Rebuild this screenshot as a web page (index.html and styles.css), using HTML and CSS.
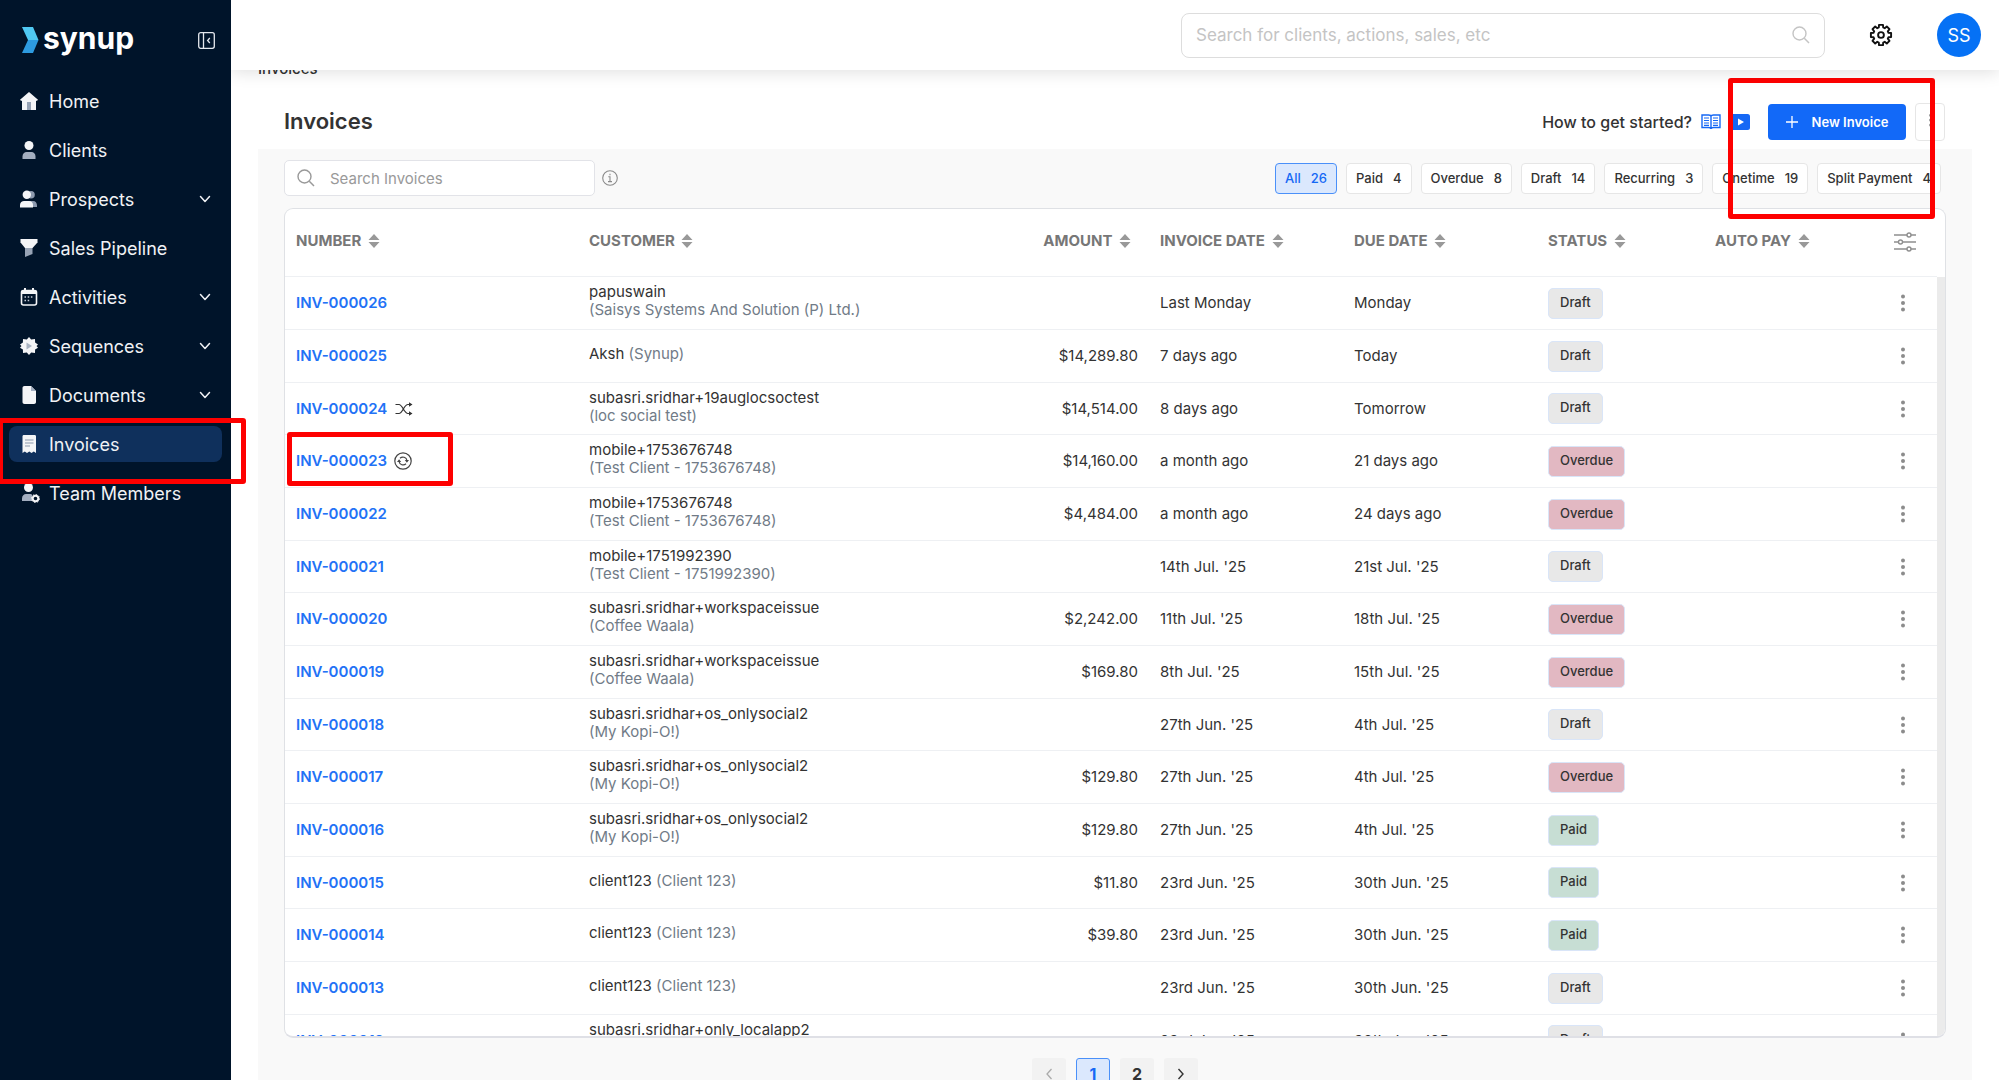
FILE: index.html
```html
<!DOCTYPE html>
<html lang="en">
<head>
  <meta charset="UTF-8">
  <meta name="viewport" content="width=device-width, initial-scale=1">
  <title>Invoices - Synup</title>
  <link rel="stylesheet" href="styles.css">
</head>
<body>

<svg class="sprite" aria-hidden="true">
  <symbol id="i-chevron" viewBox="0 0 12 12"><path d="M1.500 3.500 6 8.500l4.500-5" fill="none" stroke="currentColor" stroke-width="1.500" stroke-linecap="round" stroke-linejoin="round"/></symbol>
  <symbol id="i-search" viewBox="0 0 18 18"><circle cx="7.500" cy="7.500" r="6.500" fill="none" stroke="currentColor" stroke-width="1.400"/><path d="m12.300 12.300 4.700 4.700" fill="none" stroke="currentColor" stroke-width="1.500"/></symbol>
  <symbol id="i-sort" viewBox="0 0 12 14"><path d="M6 0l5.500 6H.5zM6 14l5.500-6H.5z" fill="#999"/></symbol>
  <symbol id="i-dots" viewBox="0 0 4 18"><circle cx="2" cy="2.500" r="2"/><circle cx="2" cy="9" r="2"/><circle cx="2" cy="15.500" r="2"/></symbol>
  <symbol id="i-split" viewBox="0 0 18 14"><path d="M.5 2.500h3.500c3.500 0 5 9 9 9h3.500M.5 11.500h3.500c3.500 0 5-9 9-9h3.500" fill="none" stroke="#333" stroke-width="1.200"/><path d="M14 .2v4.600l3.500-2.300zM14 9.200v4.600l3.500-2.300z" fill="#333"/></symbol>
  <symbol id="i-recurring" viewBox="0 0 18 18"><g fill="none" stroke="#444" stroke-width="1.200"><circle cx="9" cy="9" r="8.200"/><path d="M6 6.200a4.200 4.200 0 0 1 7 2.300M12 11.800a4.200 4.200 0 0 1-7-2.300"/></g><path d="M15 8h-4.200l2.100 2.800zM3 10h4.200L5.100 7.200z" fill="#444"/></symbol>
</svg>

<div class="app">
  <aside class="sidebar">
    <div class="brand">
      <a class="logo" href="#" aria-label="Synup">
        <svg width="17" height="26" viewBox="0 0 17 26"><path d="M0 0h11l5.500 13H6z" fill="#4fc8f2"/><path d="M6 13h10.500L11 26H0z" fill="#2d9be0"/></svg>
        <span>synup</span>
      </a>
      <button class="collapse" aria-label="Collapse menu">
        <svg width="17" height="17" viewBox="0 0 17 17" fill="none" stroke="#e4e8ee" stroke-width="1.300"><rect x=".7" y=".7" width="15.600" height="15.600" rx="2"/><path d="M5.500.7v15.600M11.800 6l-2.200 2.500 2.200 2.500"/></svg>
      </button>
    </div>
    <nav class="menu">
      <a href="#">
        <svg width="18" height="18" viewBox="0 0 18 18"><path d="M9 0 0 7.700l1.200 1.400.8-.6V18h5v-6.500h4V18h5V8.500l.8.600L18 7.700z" fill="#f4f5f7"/><path d="M7 10h4v8H7z" fill="#97a3b5"/></svg>
        Home
      </a>
      <a href="#">
        <svg width="18" height="18" viewBox="0 0 18 18"><circle cx="9" cy="4.500" r="4.500" fill="#f4f5f7"/><path d="M2.500 18v-2.500c0-3 2-4.500 4-4.500h5c2 0 4 1.500 4 4.500V18z" fill="#a3aec0"/></svg>
        Clients
      </a>
      <a href="#">
        <svg width="18" height="18" viewBox="0 0 18 18"><circle cx="11" cy="4.800" r="3.800" fill="#8c99ae"/><path d="M8 11h5c2.500 0 4 2 4 4.500V17H8z" fill="#8c99ae"/><circle cx="6.800" cy="4.800" r="4.200" fill="#f4f5f7"/><path d="M0 17.500V15c0-2.600 2-4 4-4h5c2 0 4 1.400 4 4v2.500z" fill="#f4f5f7"/></svg>
        Prospects
        <svg class="chevron" width="12" height="12"><use href="#i-chevron"/></svg>
      </a>
      <a href="#">
        <svg width="18" height="18" viewBox="0 0 18 18"><path d="M5 8h7.500v7L5 18z" fill="#97a3b5"/><path d="M.5 0h17v3.500L12.500 9H5L.5 3.500z" fill="#f4f5f7"/></svg>
        Sales Pipeline
      </a>
      <a href="#">
        <svg width="18" height="18" viewBox="0 0 18 18"><rect x="1.500" y="2.500" width="15" height="14.500" rx="2" fill="none" stroke="#f4f5f7" stroke-width="1.600"/><path d="M1.500 2.500h15v3.500h-15zM4 0h2v3H4zM12 0h2v3h-2z" fill="#f4f5f7"/><path d="M4.500 9h9M4.500 12.500h6" stroke="#c5ccd6" stroke-width="1.500" stroke-dasharray="1.500 1.700"/></svg>
        Activities
        <svg class="chevron" width="12" height="12"><use href="#i-chevron"/></svg>
      </a>
      <a href="#">
        <svg width="18" height="18" viewBox="0 0 18 18"><path d="m9 0 2.200 2.500 3.800-.5.100 3.500L18 7.500 16.500 9l1.500 1.800-2.900 1.700-.1 3.500-3.800-.5L9 18l-2.200-2.500-3.800.5-.1-3.500L0 10.800 1.500 9 0 7.500l2.900-2L3 2l3.800.5z" fill="#f4f5f7"/><path d="M6.500 5.500 12 9l-5.500 3.500z" fill="#a9b3c2"/></svg>
        Sequences
        <svg class="chevron" width="12" height="12"><use href="#i-chevron"/></svg>
      </a>
      <a href="#">
        <svg width="18" height="18" viewBox="0 0 18 18"><path d="M2.500 2c0-1.200.8-2 2-2H11l5 5v11c0 1.200-.8 2-2 2H4.500c-1.200 0-2-.8-2-2z" fill="#f4f5f7"/><path d="M11 0v5h5z" fill="#a3aec0"/></svg>
        Documents
        <svg class="chevron" width="12" height="12"><use href="#i-chevron"/></svg>
      </a>
      <a href="#" class="active">
        <svg width="18" height="18" viewBox="0 0 18 18"><path d="M2.500 1.500C2.500.5 3 0 4 0h10.500c1 0 1.500.5 1.500 1.500V18l-2.200-1.500L11.500 18l-2.200-1.500L7 18l-2.200-1.500L2.500 18z" fill="#f4f5f7"/><path d="M5 5h8.500M5 8h8.500M5 11h5" stroke="#8c99ae" stroke-width="1.200"/></svg>
        Invoices
      </a>
      <a href="#">
        <svg class="team" width="20" height="20" viewBox="0 0 20 20"><circle cx="8.500" cy="4.500" r="4.500" fill="#f4f5f7"/><path d="M2 18v-2.500c0-3 2-4.500 4-4.500h4.500c1.500 0 2 1 1.500 2.500V18z" fill="#a3aec0"/><circle cx="15.500" cy="15.500" r="2.800" fill="none" stroke="#f4f5f7" stroke-width="2"/><circle cx="15.500" cy="15.500" r="4" fill="none" stroke="#f4f5f7" stroke-width="1" stroke-dasharray="1.500 1.600"/></svg>
        Team Members
      </a>
    </nav>
    <span class="highlight highlight-menu"></span>
  </aside>

  <div class="main">
    <header class="topbar">
      <label class="global-search">
        <input type="search" placeholder="Search for clients, actions, sales, etc" aria-label="Search for clients, actions, sales, etc">
        <svg width="18" height="18"><use href="#i-search"/></svg>
      </label>
      <button class="settings" aria-label="Settings">
        <svg width="24" height="24" viewBox="0 0 24 24" fill="none" stroke="#111" stroke-width="1.900" stroke-linejoin="round"><circle cx="12" cy="12" r="2.900"/><path d="M10 1.900h4l.2 2.600 1.500.7 2.100-1.700 2.700 2.700-1.700 2.100.7 1.500 2.600.2v4l-2.600.2-.7 1.500 1.700 2.100-2.700 2.700-2.100-1.700-1.500.7-.2 2.600h-4l-.2-2.600-1.500-.7-2.100 1.700-2.700-2.700 1.700-2.100-.7-1.500-2.600-.2v-4l2.600-.2.700-1.500-1.700-2.100 2.700-2.700 2.100 1.700 1.500-.7z"/></svg>
      </button>
      <button class="avatar" aria-label="Account">SS</button>
    </header>

    <main class="content">
      <div class="breadcrumb">Invoices</div>
      <div class="title-row">
        <h1>Invoices</h1>
        <div class="title-actions">
          <span class="help">How to get started?</span>
          <a href="#" class="help-link" aria-label="Read the guide">
            <svg width="20" height="16" viewBox="0 0 20 16" fill="none" stroke="#1668f5"><path d="M1 1h6.500c1.500 0 2.500.6 2.500 1.500C10 1.600 11 1 12.500 1H19v12.500h-6.500c-1.500 0-2.500.5-2.500 1.500 0-1-1-1.500-2.500-1.500H1zM10 2.500V15" stroke-width="1.400"/><path d="M3 4h5M3 6.500h5M3 9h5M3 11.300h5M12 4h5M12 6.500h5M12 9h5M12 11.300h5" stroke-width="1.200"/></svg>
          </a>
          <a href="#" class="help-link" aria-label="Watch the video">
            <svg width="20" height="16" viewBox="0 0 20 16"><rect width="20" height="16" rx="2.500" fill="#1668f5"/><path d="M8 4.500v7l6-3.500z" fill="#fff"/></svg>
          </a>
          <button class="btn-primary">
            <svg width="12" height="12" viewBox="0 0 12 12"><path d="M6 0v12M0 6h12" stroke="#fff" stroke-width="1.300"/></svg>
            New Invoice
          </button>
          <button class="btn-more" aria-label="More actions"><svg width="3" height="14" fill="#999"><use href="#i-dots"/></svg></button>
        </div>
      </div>

      <section class="panel">
        <div class="toolbar">
          <label class="table-search">
            <svg width="18" height="18"><use href="#i-search"/></svg>
            <input type="search" placeholder="Search Invoices" aria-label="Search Invoices">
          </label>
          <button class="info" aria-label="Search help">
            <svg width="16" height="16" viewBox="0 0 16 16" fill="none" stroke="#8a8a8a" stroke-width="1.100"><circle cx="8" cy="8" r="7.300"/><path d="M6.300 6.800H8v4.700M6 11.600h4M8 3.700v1.500"/></svg>
          </button>
          <div class="filters">
            <button class="selected">All <span>26</span></button>
            <button>Paid <span>4</span></button>
            <button>Overdue <span>8</span></button>
            <button>Draft <span>14</span></button>
            <button>Recurring <span>3</span></button>
            <button>Onetime <span>19</span></button>
            <button>Split Payment <span>4</span></button>
          </div>
        </div>

        <div class="table-card">
          <table>
            <colgroup>
              <col class="col-number">
              <col>
              <col class="col-amount">
              <col class="col-date">
              <col class="col-date">
              <col class="col-status">
              <col class="col-autopay">
              <col class="col-action">
            </colgroup>
            <thead>
              <tr>
                <th>NUMBER <svg width="12" height="14"><use href="#i-sort"/></svg></th>
                <th>CUSTOMER <svg width="12" height="14"><use href="#i-sort"/></svg></th>
                <th class="amount">AMOUNT <svg width="12" height="14"><use href="#i-sort"/></svg></th>
                <th>INVOICE DATE <svg width="12" height="14"><use href="#i-sort"/></svg></th>
                <th>DUE DATE <svg width="12" height="14"><use href="#i-sort"/></svg></th>
                <th>STATUS <svg width="12" height="14"><use href="#i-sort"/></svg></th>
                <th>AUTO PAY <svg width="12" height="14"><use href="#i-sort"/></svg></th>
                <th class="action">
                  <button aria-label="Choose columns">
                    <svg width="22" height="20" viewBox="0 0 22 20" fill="#fff" stroke="#8f8f8f" stroke-width="1.400"><path d="M0 3h22M0 10h22M0 17h22"/><circle cx="15" cy="3" r="2"/><circle cx="6.500" cy="10" r="2"/><circle cx="15" cy="17" r="2"/></svg>
                  </button>
                </th>
              </tr>
            </thead>
            <tbody id="invoiceRows"></tbody>
          </table>
        </div>

        <nav class="pagination" aria-label="Pages">
          <button disabled aria-label="Previous page"><svg width="8" height="12" viewBox="0 0 8 12"><path d="M6.500 1 2 6l4.500 5" fill="none" stroke="#aaa" stroke-width="1.300"/></svg></button>
          <button class="selected">1</button>
          <button>2</button>
          <button aria-label="Next page"><svg width="8" height="12" viewBox="0 0 8 12"><path d="M1.500 1 6 6l-4.500 5" fill="none" stroke="#333" stroke-width="1.400"/></svg></button>
        </nav>
      </section>
      <span class="highlight highlight-new"></span>
    </main>
  </div>
</div>

<script src="script.js"></script>
</body>
</html>
```

FILE: styles.css
```css
* {
  box-sizing: border-box;
}
body {
  font-family: Inter, 'Liberation Sans', sans-serif;
  font-size: 16px;
  color: #333;
  background: #fff;
  margin: 0;
}
button, input {
  font-family: inherit;
  color: inherit;
}
button {
  background: none;
  border: none;
  padding: 0;
  cursor: pointer;
}
a {
  text-decoration: none;
}
svg {
  flex: none;
}
.sprite {
  display: none;
}
.app {
  display: flex;
  height: 100vh;
  overflow: hidden;
}

/* sidebar */
.sidebar {
  position: relative;
  z-index: 3;
  flex: none;
  width: 231px;
  background: #00142a;
}
.brand {
  display: flex;
  align-items: center;
  justify-content: space-between;
  height: 80px;
  padding: 0 16px 0 22px;
}
.logo {
  display: flex;
  align-items: center;
  gap: 4px;
  color: #fff;
  font-size: 30px;
  font-weight: 700;
  line-height: 30px;
}
.logo span {
  padding-bottom: 4px;
}
.collapse {
  display: flex;
}
.menu {
  display: flex;
  flex-direction: column;
  gap: 13px;
  padding: 3px 9px;
}
.menu a {
  display: flex;
  align-items: center;
  gap: 11px;
  height: 36px;
  padding: 0 11px;
  border-radius: 8px;
  color: #f0f2f5;
  font-size: 18px;
  font-weight: 400;
}
.menu a.active {
  background: #0f305c;
}
.menu .chevron {
  margin-left: auto;
}
.menu .team {
  margin-right: -2px;
}

/* top bar */
.main {
  flex: 1;
  min-width: 0;
  display: flex;
  flex-direction: column;
}
.topbar {
  position: relative;
  z-index: 2;
  flex: none;
  display: flex;
  align-items: center;
  justify-content: flex-end;
  height: 70px;
  padding: 0 18px;
  background: #fff;
  box-shadow: 0 2px 16px rgba(0,0,0,0.13);
}
.global-search {
  display: flex;
  align-items: center;
  width: 644px;
  height: 45px;
  padding: 0 14px;
  border: 1px solid #ddd;
  border-radius: 8px;
  color: #c4c4c4;
}
.global-search input,
.table-search input {
  flex: 1;
  min-width: 0;
  padding: 0;
  border: none;
  outline: none;
  background: none;
}
.global-search input {
  font-size: 17px;
}
input::placeholder {
  color: inherit;
  opacity: 1;
}
.settings {
  display: flex;
  margin: 0 44px;
}
.avatar {
  width: 44px;
  height: 44px;
  border-radius: 50%;
  background: #0571f5;
  color: #fff;
  font-size: 18px;
}

/* page */
.content {
  position: relative;
  flex: 1;
  min-height: 0;
  display: flex;
  flex-direction: column;
  padding: 0 27px;
}
.breadcrumb {
  margin-top: -11px;
  line-height: 20px;
  font-size: 15px;
  font-weight: 500;
}
.title-row {
  display: flex;
  align-items: center;
  justify-content: space-between;
  height: 70px;
  padding: 15px 27px 0 26px;
}
h1 {
  margin: 0;
  font-size: 22px;
  font-weight: 600;
}
.title-row h1 {
  padding-bottom: 2px;
}
.title-actions {
  display: flex;
  align-items: center;
}
.help {
  font-weight: 500;
}
.help-link {
  display: flex;
  margin-left: 9px;
}
.btn-primary {
  display: flex;
  align-items: center;
  justify-content: center;
  gap: 14px;
  width: 138px;
  height: 36px;
  margin-left: 18px;
  border-radius: 4px;
  background: #1269f8;
  color: #fff;
  font-size: 13px;
  font-weight: 600;
}
.btn-more {
  width: 30px;
  height: 38px;
  margin-left: 9px;
  border: 1px solid #e6e6e6;
  border-radius: 4px;
}
.panel {
  flex: 1;
  min-height: 0;
  padding: 11px 26px 0;
  background: #f9f9f9;
}
.toolbar {
  display: flex;
  align-items: center;
  padding-bottom: 12px;
}
.table-search {
  display: flex;
  align-items: center;
  gap: 15px;
  width: 311px;
  height: 36px;
  padding: 0 12px;
  border: 1px solid #e2e3e8;
  border-radius: 5px;
  background: #fff;
  color: #999;
}
.table-search input {
  font-size: 15px;
}
.info {
  display: flex;
  margin-left: 7px;
}
.filters {
  display: flex;
  gap: 9px;
  margin: 0 5px 0 auto;
}
.filters button {
  display: flex;
  gap: 10px;
  padding: 0 9px;
  border: 1px solid #e6e6e6;
  border-radius: 4px;
  background: #fff;
  font-size: 13px;
  font-weight: 500;
  line-height: 29px;
}
.filters .selected,
.pagination .selected {
  border: 1px solid #4a90f9;
  background: #dbe8fd;
  color: #1668f5;
}

/* table */
.table-card {
  position: relative;
  height: calc(100vh - 250px);
  border: 1px solid #dfe1e5;
  border-bottom: 2px solid #dfe0e6;
  border-radius: 9px;
  background: #fff;
  overflow: hidden;
}
.table-card::after {
  content: '';
  position: absolute;
  top: 68px;
  right: 0;
  bottom: 0;
  width: 8px;
  background: #ebebeb;
}
table {
  width: calc(100% - 8px);
  table-layout: fixed;
  border-collapse: separate;
  border-spacing: 0;
}
.col-number { width: 293px; }
.col-amount { width: 149px; }
.col-date { width: 194px; }
.col-status { width: 167px; }
.col-autopay { width: 165px; }
.col-action { width: 68px; }
th, td {
  padding: 0 11px;
  border-bottom: 1px solid #eef0f3;
  text-align: left;
}
th {
  height: 68px;
  padding-bottom: 4px;
  color: #777;
  font-size: 15px;
  font-weight: 700;
  white-space: nowrap;
}
th svg {
  margin-left: 3px;
  vertical-align: -2px;
}
td {
  height: 53px;
  font-size: 15px;
  line-height: 18px;
}
tbody tr:nth-child(3n) td {
  height: 52px;
}
.amount {
  text-align: right;
}
th.amount {
  padding-right: 18px;
}
.number {
  position: relative;
}
.number a {
  color: #2272f6;
  font-weight: 600;
}
.number svg {
  margin-left: 3px;
  vertical-align: -4px;
}
.customer {
  padding-bottom: 4px;
}
.company {
  color: #717b87;
}
.company.below {
  display: block;
  min-height: 18px;
}
.badge {
  display: inline-block;
  padding: 0 11px 2px;
  border: 1px solid #d9e5f8;
  border-radius: 5px;
  background: #e8e8e8;
  font-size: 13px;
  font-weight: 500;
  line-height: 27px;
}
.badge.overdue {
  background: #e2b8c2;
}
.badge.paid {
  background: #c7ded4;
}
.action {
  padding: 0;
  text-align: center;
}
td.action {
  padding-top: 3px;
}
.action button {
  vertical-align: middle;
}

/* pagination */
.pagination {
  display: flex;
  justify-content: center;
  gap: 10px;
  padding-top: 20px;
}
.pagination button {
  width: 34px;
  height: 32px;
  border-radius: 3px;
  background: #f2f2f2;
  font-size: 16px;
  font-weight: 700;
}

/* red callout frames */
.highlight {
  position: absolute;
  z-index: 1;
  border: 5px solid #fe0000;
  border-radius: 3px;
  pointer-events: none;
}
.highlight-menu {
  top: 418px;
  left: -2px;
  width: 248px;
  height: 66px;
}
.highlight-new {
  top: 8px;
  right: 64px;
  width: 207px;
  height: 141px;
}
.highlight-number {
  top: -3px;
  left: 2px;
  width: 166px;
  height: 54px;
}
```

FILE: script.js
```js
// number, customer, company, amount, invoice date, due date, status, kind
const invoices = [
  ['INV-000026', 'papuswain', '(Saisys Systems And Solution (P) Ltd.)', '', 'Last Monday', 'Monday', 'Draft'],
  ['INV-000025', 'Aksh', '(Synup)', '$14,289.80', '7 days ago', 'Today', 'Draft'],
  ['INV-000024', 'subasri.sridhar+19auglocsoctest', '(loc social test)', '$14,514.00', '8 days ago', 'Tomorrow', 'Draft', 'split'],
  ['INV-000023', 'mobile+1753676748', '(Test Client - 1753676748)', '$14,160.00', 'a month ago', '21 days ago', 'Overdue', 'recurring'],
  ['INV-000022', 'mobile+1753676748', '(Test Client - 1753676748)', '$4,484.00', 'a month ago', '24 days ago', 'Overdue'],
  ['INV-000021', 'mobile+1751992390', '(Test Client - 1751992390)', '', "14th Jul. '25", "21st Jul. '25", 'Draft'],
  ['INV-000020', 'subasri.sridhar+workspaceissue', '(Coffee Waala)', '$2,242.00', "11th Jul. '25", "18th Jul. '25", 'Overdue'],
  ['INV-000019', 'subasri.sridhar+workspaceissue', '(Coffee Waala)', '$169.80', "8th Jul. '25", "15th Jul. '25", 'Overdue'],
  ['INV-000018', 'subasri.sridhar+os_onlysocial2', '(My Kopi-O!)', '', "27th Jun. '25", "4th Jul. '25", 'Draft'],
  ['INV-000017', 'subasri.sridhar+os_onlysocial2', '(My Kopi-O!)', '$129.80', "27th Jun. '25", "4th Jul. '25", 'Overdue'],
  ['INV-000016', 'subasri.sridhar+os_onlysocial2', '(My Kopi-O!)', '$129.80', "27th Jun. '25", "4th Jul. '25", 'Paid'],
  ['INV-000015', 'client123', '(Client 123)', '$11.80', "23rd Jun. '25", "30th Jun. '25", 'Paid'],
  ['INV-000014', 'client123', '(Client 123)', '$39.80', "23rd Jun. '25", "30th Jun. '25", 'Paid'],
  ['INV-000013', 'client123', '(Client 123)', '', "23rd Jun. '25", "30th Jun. '25", 'Draft'],
  ['INV-000012', 'subasri.sridhar+only_localapp2', '', '', "23rd Jun. '25", "30th Jun. '25", 'Draft']
];

const kindIcons = {
  split: '<svg width="18" height="18"><use href="#i-split"/></svg>',
  recurring: '<svg width="18" height="18"><use href="#i-recurring"/></svg><span class="highlight highlight-number"></span>'
};

document.getElementById('invoiceRows').innerHTML = invoices.map(row => {
  const [number, customer, company, amount, issued, due, status, kind] = row;
  // short names keep the company on the same line
  const inline = company && (customer + company).length < 24;
  return `<tr>
    <td class="number"><a href="#">${number}</a> ${kindIcons[kind] || ''}</td>
    <td class="customer">${customer} <span class="company${inline ? '' : ' below'}">${company}</span></td>
    <td class="amount">${amount}</td>
    <td>${issued}</td>
    <td>${due}</td>
    <td><span class="badge ${status.toLowerCase()}">${status}</span></td>
    <td></td>
    <td class="action"><button aria-label="Actions for ${number}"><svg width="4" height="18" fill="#8c8c8c"><use href="#i-dots"/></svg></button></td>
  </tr>`;
}).join('');
```
